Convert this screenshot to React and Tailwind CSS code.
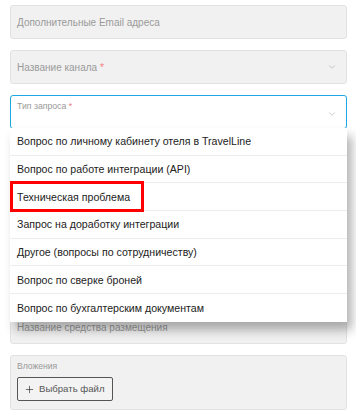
import { ChevronDown, Plus } from 'lucide-react';

const options = [
  'Вопрос по личному кабинету отеля в TravelLine',
  'Вопрос по работе интеграции (API)',
  'Техническая проблема',
  'Запрос на доработку интеграции',
  'Другое (вопросы по сотрудничеству)',
  'Вопрос по сверке броней',
  'Вопрос по бухгалтерским документам',
];

function Field({ children, select = false }) {
  return (
    <div className="h-[34px] rounded-[3px] border border-[#e2e2e2] bg-[#f1f1f1] flex items-center justify-between pl-[6px] pr-[9px]">
      <span className="text-[10px] text-[#9a9a9a]">{children}</span>
      {select && <ChevronDown size={10} strokeWidth={1.5} className="text-[#aaa]" />}
    </div>
  );
}

export default function App() {
  return (
    <div
      className="w-[356px] h-[417px] bg-white overflow-hidden"
      style={{ fontFamily: '"Liberation Sans", Arial, sans-serif' }}
    >
      <div className="flex flex-col gap-[11px] pt-[5px] pl-[10px] pr-[9px]">
        <Field>Дополнительные Email адреса</Field>
        <Field select>
          Название канала <span className="text-[#f08080]">*</span>
        </Field>

        {/* open select */}
        <div className="relative">
          <div className="h-[34px] rounded-[3px] border border-[#1ea7e1] bg-white flex justify-between pl-[6px] pr-[9px]">
            <span className="text-[8.7px] text-[#999] pt-[4px]">
              Тип запроса <span className="text-[#f08080]">*</span>
            </span>
            <ChevronDown size={10} strokeWidth={1.5} className="text-[#aaa] mt-[13px]" />
          </div>

          <div className="absolute left-0 right-0 top-[33px] z-10 bg-white shadow-[5px_8px_10px_rgba(0,0,0,0.3)]">
            {options.map((o, i) => (
              <div
                key={o}
                className={`h-[27.7px] flex items-center pl-[7px] pt-[2px] text-[10.6px] text-[#222] ${
                  i < options.length - 1 ? 'border-b border-[#ececec]' : ''
                }`}
              >
                {o}
              </div>
            ))}
            {/* highlight */}
            <div className="absolute left-0 top-[53px] w-[134px] h-[31px] border-[3px] border-[#ff0000]" />
          </div>
        </div>

        <div className="mt-[170px]">
          <Field>Название средства размещения</Field>
        </div>

        <div className="h-[55px] rounded-[3px] border border-[#e2e2e2] bg-[#f1f1f1] pl-[6px] pt-[5px]">
          <div className="text-[8.6px] text-[#999] leading-[11px]">Вложения</div>
          <button className="mt-[5px] h-[24px] pl-[6px] pr-[7px] flex items-center gap-[4px] border border-[#555] rounded-[2px] bg-[#f3f3f3] text-[9.6px] text-[#555]">
            <Plus size={11} strokeWidth={1.5} className="text-[#333]" />
            Выбрать файл
          </button>
        </div>
      </div>
    </div>
  );
}
